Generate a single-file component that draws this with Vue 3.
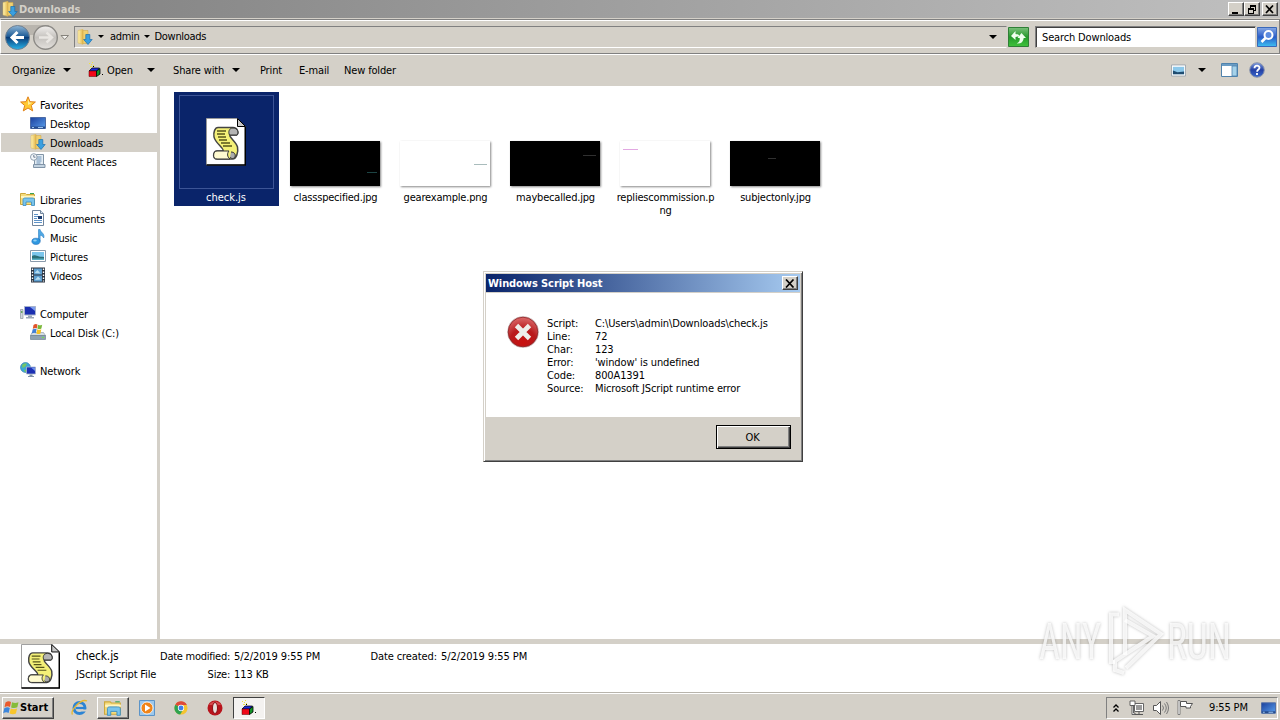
<template>
  <div class="screen">
    <svg class="sprite" width="0" height="0" aria-hidden="true">
      <defs>
        <linearGradient id="gFolder" x1="0" x2="1">
          <stop offset="0" stop-color="#fff3b0" />
          <stop offset="1" stop-color="#e3b64a" />
        </linearGradient>
        <linearGradient id="gScreen" x1="0" x2="1" y2="1">
          <stop offset="0" stop-color="#1a3f9c" />
          <stop offset="1" stop-color="#5aa0ee" />
        </linearGradient>
        <linearGradient id="gBack" y2="1" x2="0">
          <stop offset="0" stop-color="#8fb6d6" />
          <stop offset=".45" stop-color="#1f5d98" />
          <stop offset=".5" stop-color="#0a3c78" />
          <stop offset="1" stop-color="#27b4ea" />
        </linearGradient>
        <linearGradient id="gFwd" y2="1" x2="0">
          <stop offset="0" stop-color="#f2f0ee" />
          <stop offset=".5" stop-color="#c4c1bd" />
          <stop offset="1" stop-color="#e4e1dd" />
        </linearGradient>
        <linearGradient id="gGreen" y2="1" x2="0">
          <stop offset="0" stop-color="#7cc07c" />
          <stop offset=".5" stop-color="#259a2c" />
          <stop offset="1" stop-color="#3fc23c" />
        </linearGradient>
        <linearGradient id="gSearch" y2="1" x2="0">
          <stop offset="0" stop-color="#86a8e4" />
          <stop offset=".5" stop-color="#2a5cc8" />
          <stop offset="1" stop-color="#3ec0f2" />
        </linearGradient>
        <linearGradient id="gHelp" y2="1" x2="0">
          <stop offset="0" stop-color="#7f9ce0" />
          <stop offset=".5" stop-color="#2440a4" />
          <stop offset="1" stop-color="#3a68cc" />
        </linearGradient>
        <radialGradient id="gError" cx=".5" cy=".85" r=".9">
          <stop offset="0" stop-color="#c8100f" />
          <stop offset=".5" stop-color="#b81a1c" />
          <stop offset="1" stop-color="#e07474" />
        </radialGradient>
      </defs>

      <symbol id="dl" viewBox="0 0 16 16">
        <path d="M1 1.500l5-1.200v15L1 14z" fill="url(#gFolder)" stroke="#d8b65a" stroke-width=".5" />
        <path d="M6 1.500h5v13H6z" fill="#f0d070" stroke="#cfa544" stroke-width=".5" />
        <path d="M8.800 5.500h4v5h2.400L11 15.500 6.600 10.500h2.200z" fill="#3a9fe0" stroke="#1a6fae" stroke-width=".7" />
      </symbol>
      <symbol id="star" viewBox="0 0 16 16">
        <path d="M8 .8l2 4.900 5.400.3-4.100 3.500 1.400 5.400L8 12l-4.700 2.900 1.400-5.400L.6 6 6 5.700z" fill="#ffc933" stroke="#e0801a" stroke-width="1" />
        <path d="M8 3l1.300 3.500 3 .3L8 9z" fill="#fff0a0" />
      </symbol>
      <symbol id="desktop" viewBox="0 0 16 16">
        <path d="M.5 2.500h15v11H.5z" fill="url(#gScreen)" stroke="#4c6aa4" />
        <path d="M1 11.500h14v2H1z" fill="#254b8c" />
        <path d="M2 12h2v1H2zM8 12h5v1H8z" fill="#9cc4ee" />
      </symbol>
      <symbol id="recent" viewBox="0 0 16 16">
        <path d="M4.500 1.500h9v11h-9z" fill="#e4edf4" stroke="#8295a6" />
        <path d="M6.500 4h5M6.500 6h5M6.500 8h5M6.500 10h4" stroke="#6f93b8" />
        <path d="M3.500 11.500h11.500v3H3.500z" fill="#c3d3e0" stroke="#8194a8" />
        <circle cx="3.800" cy="4" r="3.300" fill="#f3f7fa" stroke="#90a0b0" />
        <path d="M3.800 2v2.200h1.700" fill="none" stroke="#4c6078" stroke-width=".8" />
      </symbol>
      <symbol id="library" viewBox="0 0 16 16">
        <path d="M.5 2.500h5l1 1h8v10H.5z" fill="#f5dc7e" stroke="#cda83c" />
        <path d="M1 5h14v2H1z" fill="#fff5c0" />
        <path d="M10 2.500h4" stroke="#3da456" />
        <path d="M3 8.500c0-1 1-1.500 2-1.500h7c1.500 0 2.500.5 2.500 1.500v6h-3v-3.500H6v3.500H3z" fill="#79c4ec" stroke="#3a8cc0" stroke-width=".8" />
      </symbol>
      <symbol id="document" viewBox="0 0 16 16">
        <path d="M2.500.5h8l3 3v12h-11z" fill="#fff" stroke="#71859c" />
        <path d="M10.500.5v3h3" fill="#d8e4f0" stroke="#71859c" />
        <path d="M4 4.500h4M4 6.500h4M4 8.500h3M4 10.500h8M4 12.500h8" stroke="#5f93c8" />
        <path d="M8 6h4v3H8z" fill="#1d3d70" />
      </symbol>
      <symbol id="music" viewBox="0 0 16 16">
        <path d="M8.500.5h1.600c.5 3 5 4 3.600 8.500-.8-1.800-2-2.600-3.600-2.800v6h-1.600z" fill="#4fa8e4" stroke="#2a7fc4" stroke-width=".6" />
        <ellipse cx="6" cy="12.300" rx="4.100" ry="3.100" fill="#2f98e0" stroke="#1c6cb8" stroke-width=".6" />
        <ellipse cx="5" cy="11.500" rx="1.800" ry="1.100" fill="#8fd0f6" />
      </symbol>
      <symbol id="picture" viewBox="0 0 16 16">
        <path d="M.5 2.500h15v11H.5z" fill="#fff" stroke="#8a9aab" />
        <path d="M2 4h12v8H2z" fill="#7cc6ec" />
        <path d="M2 8c3-2 5 1 12 1v3H2z" fill="#2b6f78" />
        <path d="M2 10.500h12V12H2z" fill="#58b0c4" />
      </symbol>
      <symbol id="video" viewBox="0 0 16 16">
        <path d="M1 .5h14v15H1z" fill="#2a3340" />
        <path d="M4 1.500h8v6H4zM4 8.500h8v6H4z" fill="#5e9fd0" />
        <path d="M4.500 6l3-3 3 3.500zM5 13l3-3.500 3 3z" fill="#b8ddf0" />
        <path d="M2.500 1.500v13M13.500 1.500v13" stroke="#fff" stroke-width="1.400" stroke-dasharray="1.500 1.500" />
      </symbol>
      <symbol id="computer" viewBox="0 0 16 16">
        <path d="M.5 4.500h2.500v9H.5z" fill="#d0d6dc" stroke="#8d979f" stroke-width=".7" />
        <path d="M1 6h1.500v2H1z" fill="#68a860" />
        <path d="M4.500 1.500h11v8.500h-11z" fill="#1b2fb0" stroke="#a6b2cc" />
        <path d="M10 2h5v4z" fill="#7c9cf0" />
        <path d="M8 10.500h4v1.500h2v1.500H6V12h2z" fill="#9ba7b8" />
      </symbol>
      <symbol id="disk" viewBox="0 0 16 16">
        <path d="M2 8.500h11.500l2 3H.5z" fill="#d4dde4" stroke="#8899a6" stroke-width=".6" />
        <path d="M.5 11.500h15v4H.5z" fill="#8ea2b0" stroke="#62788a" stroke-width=".6" />
        <path d="M12 13h2v1h-2z" fill="#6fe04c" />
        <path d="M3.500 1q2-1.500 4-.5L6.800 4.500q-1.800-1-4 .4z" fill="#e2542a" />
        <path d="M8 .8q2 1 4.200 0l-.8 3.800q-2 1-4.100 0z" fill="#7ab83a" />
        <path d="M2.600 5.500q2-1.300 4-.4L5.800 9.200q-1.700-1-4 .4z" fill="#3f7fd6" />
        <path d="M7.100 5.300q2 1 4.200 0l-.8 4.100q-2 1-4.100 0z" fill="#f4c224" />
      </symbol>
      <symbol id="network" viewBox="0 0 16 16">
        <circle cx="5.500" cy="5.500" r="5" fill="#3ca6d8" stroke="#2a78a8" stroke-width=".6" />
        <path d="M2 3q3-3 5-1L5 5 2.500 6zM4 8l3-1 1 2-3 1.200z" fill="#74c668" />
        <path d="M6.500 5h9v7h-9z" fill="#1c30b4" stroke="#a9b6cc" stroke-width=".8" />
        <path d="M11 5.500h4v3.500z" fill="#6f92ec" />
        <path d="M9.500 12.500h3V14h1.500v1H8v-1h1.500z" fill="#7f92a8" />
      </symbol>
      <symbol id="box" viewBox="0 0 16 16">
        <path d="M3 2.500h1M4 .5h1M2 4.500h2M5 3.500h1M1 1.500h1" stroke="#f0e43c" />
        <path d="M5 4h1v1H5zM14 12h1v1h-1z" fill="#000" />
        <path d="M1 9l3-3h7.500L9 9z" fill="#1a28d8" stroke="#000" stroke-width=".7" />
        <path d="M1 9h7.500v5.500H1z" fill="#f00818" stroke="#500" stroke-width=".5" />
        <path d="M8.500 9L12 6.500V12l-3.500 2.500z" fill="#129428" stroke="#000" stroke-width=".8" />
      </symbol>
      <symbol id="script" viewBox="0 0 40 48">
        <path d="M.5.500h31l8 8V47H.5z" fill="#fff" stroke="#999" />
        <path d="M.5 47h38.800V9" fill="none" stroke="#000" stroke-width="1.600" />
        <path d="M31.500.500v8h8z" fill="#c8c8c8" stroke="#000" />
        <path d="M12 9.500h15c5 0 6 6 3.500 7.500h-6c-3 1 6 7 7 12 1 5-1 12-5 12H11c-5 0-4-8 0-8h6c2-2-8-8-9-14-.8-5 1-9.500 4-9.500z" fill="#f4f078" stroke="#444" stroke-width="1.500" />
        <path d="M27 10c-4 0-5 4-3.500 7h7.500c2-2 1-7-4-7z" fill="#b4b4b4" stroke="#333" />
        <path d="M11 33h12c-2 2-2 6 1 8H11c-5 0-4-8 0-8z" fill="#fffbd0" stroke="#333" />
        <path d="M25 34c3 0 5 2 4 5-1 2-4 2-5 0" fill="#aaa" stroke="#333" />
        <path d="M11 13h9M11 16h8M12 19h8M13 22h8M15 25h9M17 28h9" stroke="#55531a" stroke-width="1.300" />
      </symbol>
      <symbol id="flagwin" viewBox="0 0 17 16">
        <path d="M2.500 2.500q3-2 5.500-.5L7 7Q4.500 5.500 1.500 7.200z" fill="#ea5a2c" />
        <path d="M9 2.300q3 1.500 6.500 0l-1.200 5q-3 1.500-6.200.1z" fill="#86bc3a" />
        <path d="M1.300 8.300q3-1.800 5.500-.3l-1.200 5q-2.500-1.500-5.400.3z" fill="#3c86dc" />
        <path d="M7.800 8.400q3 1.500 6.300 0l-1.200 5q-3 1.500-6.300 0z" fill="#f8c62c" />
      </symbol>
    </svg>

    <header class="titlebar">
      <svg class="i16"><use href="#dl" /></svg>
      <span class="title">Downloads</span>
      <div class="winbtns">
        <button><svg width="10" height="9"><path d="M1 7h6v2H1z" /></svg></button>
        <button>
          <svg width="10" height="9"><path d="M3 0h6v6H7V5h1V2H4v1H3z" /><path d="M1 3h6v6H1zM2 5v3h4V5z" fill-rule="evenodd" /></svg>
        </button>
        <button class="x"><svg width="10" height="9"><path d="M1 .500l7 7.500M8 .500L1 8" stroke="#000" stroke-width="1.700" /></svg></button>
      </div>
    </header>

    <div class="address">
      <svg class="navbtns" width="66" height="28" viewBox="0 0 66 28">
        <path d="M14 2h30v10H14z" fill="#b9b5ae" />
        <circle cx="12.500" cy="14.500" r="12" fill="url(#gBack)" stroke="#6f7f90" />
        <path d="M12.500 9L7 14.500l5.500 5.500M7.500 14.500H19" fill="none" stroke="#fff" stroke-width="3" />
        <circle cx="40.500" cy="14.500" r="11.800" fill="url(#gFwd)" stroke="#8c8a86" stroke-width="1.400" />
        <path d="M41.500 9.500l5.500 5-5.500 5M34 14.500h13" fill="none" stroke="#e9e6e2" stroke-width="2.400" />
        <path d="M56 12.500h7.500l-3.800 4z" fill="#f4f2ee" stroke="#86837c" />
      </svg>
      <div class="path">
        <svg class="i16"><use href="#dl" /></svg>
        <i class="tri small root" />
        <span>admin</span>
        <i class="tri small" />
        <span>Downloads</span>
        <i class="tri end" />
      </div>
      <svg class="go" width="21" height="20" viewBox="0 0 21 20">
        <path d="M.5.500h20v19H.5z" fill="url(#gGreen)" stroke="#2f7f36" />
        <path d="M3 9l4.500-5v3q4 0 4 3-1.500-1-4 0v3z" fill="#f0fff0" />
        <path d="M18 11l-4.500-5L9.500 11h2.200q.5 4-3 5.500 6.500.5 7-5.500z" fill="#f0fff0" />
      </svg>
      <div class="search">Search Downloads</div>
      <svg class="find" width="20" height="20" viewBox="0 0 20 20">
        <path d="M.5.500h19v19H.5z" fill="url(#gSearch)" stroke="#3a68b8" />
        <circle cx="11.500" cy="8" r="4" fill="#5d8ce0" stroke="#fff" stroke-width="2" />
        <path d="M8.500 11l-4 4" stroke="#fff" stroke-width="2.600" />
      </svg>
    </div>

    <nav class="toolbar">
      <div class="tool organize">Organize<i class="tri" /></div>
      <div class="tool open"><svg class="i16"><use href="#box" /></svg><span>Open</span><i class="tri" /></div>
      <div class="tool share">Share with<i class="tri" /></div>
      <div class="tool print">Print</div>
      <div class="tool email">E-mail</div>
      <div class="tool">New folder</div>
      <div class="views">
        <svg width="15" height="13" viewBox="0 0 16 14">
          <path d="M.5 1h15v12H.5z" fill="#fff" stroke="#9ca4ac" />
          <path d="M2 3h12v8H2z" fill="#8cc8ea" />
          <path d="M2 7l5 2 7-1v3H2z" fill="#1f4c70" />
        </svg>
        <i class="tri" />
        <svg class="pane" width="17" height="14" viewBox="0 0 17 14">
          <path d="M.5.500h16v13H.5z" fill="#fff" stroke="#4f82ac" />
          <path d="M1 1h15v2H1z" fill="#6a9cc4" />
          <path d="M11 3h5v10h-5z" fill="#a5d2ea" stroke="#4f82ac" stroke-width=".8" />
        </svg>
        <svg width="16" height="16" viewBox="0 0 16 16">
          <circle cx="8" cy="8" r="7.300" fill="url(#gHelp)" stroke="#8c96ac" />
          <path d="M5.500 6.200c0-3.400 5-3.200 5-.4 0 1.800-2.400 1.700-2.400 3.900M8 11v2" fill="none" stroke="#fff" stroke-width="1.800" />
        </svg>
      </div>
    </nav>

    <main class="body">
      <aside class="tree">
        <div
          v-for="(n, i) in tree"
          :key="i"
          class="node"
          :class="{ child: n.child, active: n.active }"
        >
          <template v-if="n.text">
            <svg class="i16"><use :href="'#' + n.icon" /></svg>
            <span>{{ n.text }}</span>
          </template>
        </div>
      </aside>

      <section class="files">
        <div v-for="f in files" :key="f.name" class="file" :class="{ selected: f.selected }">
          <div class="preview">
            <svg v-if="f.selected" width="40" height="48"><use href="#script" /></svg>
            <div v-else class="thumb" :class="f.tone">
              <i :style="{ left: f.x + 'px', top: f.y + 'px', width: f.w + 'px', background: f.mark }" />
            </div>
          </div>
          <div class="name">{{ f.name }}</div>
        </div>
      </section>
    </main>

    <footer class="details">
      <svg width="39" height="45" viewBox="0 0 40 48" preserveAspectRatio="none"><use href="#script" /></svg>
      <div class="what">
        <span class="big">check.js</span>
        <span>JScript Script File</span>
      </div>
      <div class="meta first">
        <b>Date modified:</b><span>5/2/2019 9:55 PM</span>
        <b>Size:</b><span>113 KB</span>
      </div>
      <div class="meta">
        <b>Date created:</b><span>5/2/2019 9:55 PM</span>
      </div>
    </footer>

    <div class="taskbar">
      <div class="start">
        <svg width="17" height="16"><use href="#flagwin" /></svg><span>Start</span>
      </div>
      <div class="task">
        <svg width="17" height="17" viewBox="0 0 17 17">
          <circle cx="8.500" cy="9" r="5.500" fill="none" stroke="#2c84d4" stroke-width="3" />
          <path d="M5 9h9" stroke="#2c84d4" stroke-width="2.200" />
          <path d="M11 10.500h5v2h-5z" fill="#d4d0c8" />
          <path d="M1.500 15.500C-1 12 10-1 16 2" fill="none" stroke="#e8b830" stroke-width="1.300" />
        </svg>
      </div>
      <div class="task raised"><svg class="i18"><use href="#library" /></svg></div>
      <div class="task">
        <svg width="16" height="16" viewBox="0 0 16 16">
          <path d="M.5.500h15v15H.5z" fill="#9cc8ec" stroke="#5c94c8" />
          <circle cx="8" cy="8" r="6" fill="#f08418" stroke="#fff" stroke-width=".8" />
          <path d="M6 4.500v7L11.500 8z" fill="#fff" />
        </svg>
      </div>
      <div class="task">
        <svg width="14" height="14" viewBox="0 0 16 16">
          <circle cx="8" cy="8" r="7.500" fill="#f4c430" />
          <path d="M8 8L1.500 4.200A7.500 7.500 0 0 1 14.700 4.500H8z" fill="#de4a3a" />
          <path d="M8 8L1.500 4.200A7.500 7.500 0 0 0 7 15.500L10.500 10z" fill="#2fa350" />
          <circle cx="8" cy="8" r="3.600" fill="#fff" />
          <circle cx="8" cy="8" r="2.800" fill="#3f7fe8" />
        </svg>
      </div>
      <div class="task">
        <svg width="16" height="16" viewBox="0 0 16 16">
          <circle cx="8" cy="8" r="7.500" fill="#b8141c" />
          <path d="M2 5a7 7 0 0 1 12 0z" fill="#e87070" opacity=".6" />
          <ellipse cx="8" cy="8" rx="2.500" ry="5.500" fill="#e6e0dc" stroke="#8c0c14" />
        </svg>
      </div>
      <div class="task pressed"><svg class="i16"><use href="#box" /></svg></div>

      <div class="tray">
        <svg width="6" height="8" viewBox="0 0 6 8"><path d="M.5 3.500L3 1l2.500 2.500M.5 7.500L3 5l2.500 2.500" fill="none" stroke="#000" stroke-width="1.300" /></svg>
        <svg class="net" width="16" height="16" viewBox="0 0 16 16">
          <path d="M5.500 3.500h9v8h-9z" fill="#fff" stroke="#666" />
          <path d="M7 5h6v5H7z" fill="#9a9a9a" />
          <path d="M6 14.500h8M10 12v2" stroke="#555" />
          <path d="M1 1h5v4.500H1zM3 5.500h1.500V13H6v1.500H3z" fill="#fff" stroke="#555" stroke-width=".9" />
        </svg>
        <svg class="snd" width="16" height="14" viewBox="0 0 16 14">
          <path d="M.5 4.500h3l4-4v13l-4-4h-3z" fill="#fff" stroke="#555" />
          <path d="M9.500 4.500q2 2.500 0 5M11.500 2.500q3.500 4.500 0 9M13.500 1q4 6 0 12" fill="none" stroke="#777" />
        </svg>
        <svg class="flag" width="17" height="15" viewBox="0 0 17 15">
          <path d="M1 .500h2v14H1z" fill="#fff" stroke="#666" stroke-width=".8" />
          <path d="M3.500 1.500h6v2h6l-2 3v1.500H9v-1.500H3.500z" fill="#fff" stroke="#555" />
        </svg>
        <span class="clock">9:55 PM</span>
        <svg width="15" height="14" viewBox="0 1 16 14"><use href="#desktop" width="16" height="16" /></svg>
      </div>
    </div>

    <div class="dialog">
      <div class="dlg-title">
        <span>Windows Script Host</span>
        <button><svg width="10" height="9"><path d="M1 .500l7.500 8M8.500 .500L1 8.500" stroke="#000" stroke-width="1.700" /></svg></button>
      </div>
      <div class="dlg-body">
        <svg width="32" height="32" viewBox="0 0 32 32">
          <circle cx="16" cy="16" r="15.800" fill="#c9b6b6" />
          <circle cx="16" cy="16" r="14.800" fill="url(#gError)" stroke="#8f2022" stroke-width=".8" />
          <path d="M9.500 9.500l13 13M22.500 9.500l-13 13" stroke="#eeeeea" stroke-width="4.800" />
        </svg>
        <dl>
          <template v-for="r in report" :key="r[0]">
            <dt>{{ r[0] }}</dt>
            <dd>{{ r[1] }}</dd>
          </template>
        </dl>
      </div>
      <div class="dlg-foot"><button class="ok">OK</button></div>
    </div>

    <svg class="watermark" width="220" height="76" viewBox="0 0 220 76">
      <g class="wm">
        <text x="8" y="56" textLength="62" lengthAdjust="spacingAndGlyphs">ANY</text>
        <text x="136" y="56" textLength="64" lengthAdjust="spacingAndGlyphs">RUN</text>
        <path d="M88 11.500h-8V59h4" />
        <path d="M94 52V7l36 24-35 34" />
        <path d="M94 17l28 16-38 25v9l9 3" />
      </g>
    </svg>
  </div>
</template>

<script setup>
const tree = [
  { text: 'Favorites', icon: 'star' },
  { text: 'Desktop', icon: 'desktop', child: true },
  { text: 'Downloads', icon: 'dl', child: true, active: true },
  { text: 'Recent Places', icon: 'recent', child: true },
  {},
  { text: 'Libraries', icon: 'library' },
  { text: 'Documents', icon: 'document', child: true },
  { text: 'Music', icon: 'music', child: true },
  { text: 'Pictures', icon: 'picture', child: true },
  { text: 'Videos', icon: 'video', child: true },
  {},
  { text: 'Computer', icon: 'computer' },
  { text: 'Local Disk (C:)', icon: 'disk', child: true },
  {},
  { text: 'Network', icon: 'network' }
]

const files = [
  { name: 'check.js', selected: true },
  { name: 'classspecified.jpg', tone: 'dark', x: 77, y: 31, w: 10, mark: '#1d4444' },
  { name: 'gearexample.png', tone: 'light', x: 74, y: 23, w: 13, mark: '#a9bcbc' },
  { name: 'maybecalled.jpg', tone: 'dark', x: 73, y: 14, w: 13, mark: '#303030' },
  { name: 'repliescommission.png', tone: 'light', x: 3, y: 8, w: 15, mark: '#e2a8e2' },
  { name: 'subjectonly.jpg', tone: 'dark', x: 38, y: 17, w: 8, mark: '#303030' }
]

const report = [
  ['Script:', 'C:\\Users\\admin\\Downloads\\check.js'],
  ['Line:', '72'],
  ['Char:', '123'],
  ['Error:', "'window' is undefined"],
  ['Code:', '800A1391'],
  ['Source:', 'Microsoft JScript runtime error']
]
</script>

<style>
body {
  margin: 0;
  overflow: hidden;
}
</style>

<style scoped>
.screen {
  position: relative;
  display: flex;
  flex-direction: column;
  width: 1280px;
  height: 720px;
  overflow: hidden;
  box-sizing: border-box;
  background: #d4d0c8;
  color: #000;
  font-family: Tahoma, 'DejaVu Sans Condensed', 'DejaVu Sans', sans-serif;
  font-stretch: condensed;
  font-size: 11px;
  line-height: 13px;
  letter-spacing: -0.15px;
  white-space: nowrap;
}

.screen *,
.screen *::before {
  box-sizing: border-box;
}

.sprite {
  position: absolute;
}

svg {
  display: block;
  flex: none;
}

.i16 {
  width: 16px;
  height: 16px;
}

.i18 {
  width: 18px;
  height: 18px;
}

button {
  display: flex;
  align-items: center;
  justify-content: center;
  padding: 0;
  border: 1px solid;
  border-color: #fff #404040 #404040 #fff;
  box-shadow: inset -1px -1px #808080;
  background: #d4d0c8;
  font: inherit;
  letter-spacing: inherit;
}

.tri {
  flex: none;
  width: 0;
  height: 0;
  border: 4px solid transparent;
  border-top-color: #000;
  border-bottom: 0;
}

.tri.small {
  border-width: 3px 3px 0;
}

/* title bar */
.titlebar {
  display: flex;
  align-items: center;
  height: 18px;
  padding: 0 2px;
  background: linear-gradient(90deg, #808080, #c0c0c0);
}

.title {
  margin-left: 1px;
  color: #d4d0c8;
  font-weight: bold;
  letter-spacing: 0.05px;
}

.winbtns {
  display: flex;
  margin-left: auto;
}

.winbtns button {
  width: 16px;
  height: 14px;
}

.winbtns .x {
  margin-left: 2px;
}

/* address row */
.address {
  display: flex;
  align-items: center;
  height: 35px;
  margin-top: 1px;
  padding: 0 2px 0 4px;
  border: 1px solid;
  border-color: #808080 #808080 #808080 #fff;
  box-shadow: inset 0 1px #fff;
}

.path {
  display: flex;
  align-items: center;
  width: 933px;
  height: 22px;
  margin-left: 3px;
  padding: 0 9px 0 2px;
  border: 1px solid;
  border-color: #808080 #d4d0c8 #fff #808080;
}

.path .tri {
  margin: 0 5px 0 4px;
}

.path .tri.root {
  margin: 0 6px 0 5px;
}

.path .tri.end {
  margin: 0 0 0 auto;
}

.path span {
  padding-bottom: 1px;
  letter-spacing: -0.3px;
}

.go {
  margin-left: 1px;
}

.search {
  width: 221px;
  height: 22px;
  margin-left: 6px;
  padding: 4px 6px;
  border: 1px solid;
  border-color: #808080 #d4d0c8 #d4d0c8 #808080;
  box-shadow: inset 1px 1px #404040;
  background: #fff;
}

.find {
  margin-left: 1px;
}

/* toolbar */
.toolbar {
  display: flex;
  align-items: center;
  height: 32px;
  padding: 0 15px 1px 12px;
  border-top: 1px solid #fff;
}

.tool {
  display: flex;
  align-items: center;
  justify-content: space-between;
}

.organize {
  width: 59px;
  margin-right: 17px;
}

.open {
  width: 67px;
  margin-right: 18px;
}

.open span {
  margin: 0 auto 0 3px;
}

.share {
  width: 67px;
  margin-right: 20px;
}

.print {
  width: 39px;
}

.email {
  width: 45px;
}

.views {
  display: flex;
  align-items: center;
  margin-left: auto;
}

.views .tri {
  margin: 0 15px 0 12px;
}

.pane {
  margin-right: 11px;
}

/* body */
.body {
  display: flex;
  height: 553px;
  background: #fff;
}

.tree {
  width: 160px;
  padding-top: 9px;
  border-right: 3px solid #d4d0c8;
}

.node {
  display: flex;
  align-items: center;
  gap: 4px;
  height: 19px;
  margin-left: 1px;
  padding-left: 19px;
}

.node svg {
  margin-bottom: 1px;
}

.node span {
  padding-top: 2px;
}

.node.child {
  padding-left: 29px;
}

.node.active {
  height: 19px;
  background: #d4d0c8;
}

.files {
  display: flex;
  align-items: flex-start;
  gap: 5px;
  padding: 6px 13px;
}

.file {
  width: 105px;
  height: 114px;
  text-align: center;
}

.file.selected {
  margin: 0 -1px 0 1px;
  background: #0a246a;
  color: #fff;
}

.preview {
  display: flex;
  align-items: flex-end;
  justify-content: center;
  height: 94px;
  margin-bottom: 5px;
}

.selected .preview {
  align-items: center;
  width: 95px;
  height: 94px;
  margin: 3px 5px 2px;
  padding-right: 1px;
  border: 1px solid #3c5496;
}

.thumb {
  position: relative;
  width: 90px;
  height: 45px;
  margin-right: 1px;
  box-shadow: 1px 1px 2px #888;
}

.thumb.dark {
  background: #000;
}

.thumb.light {
  background: #fff;
}

.thumb i {
  position: absolute;
  height: 1px;
}

.name {
  padding: 0 3px;
  white-space: normal;
  word-break: break-all;
  letter-spacing: -0.2px;
}

.selected .name {
  padding-right: 4px;
  letter-spacing: 0;
}

/* details pane */
.details {
  display: flex;
  align-items: flex-start;
  height: 54px;
  padding-left: 21px;
  border-top: 5px solid #d4d0c8;
  border-bottom: 1px solid #b8b4ac;
  background: #fff;
}

.what {
  display: flex;
  flex-direction: column;
  gap: 5px;
  width: 83px;
  margin-left: 16px;
  padding-top: 6px;
}

.big {
  font-size: 12px;
}

.meta {
  display: grid;
  grid-template-columns: 67px auto;
  gap: 5px 4px;
  padding-top: 6px;
  letter-spacing: -0.08px;
}

.meta b {
  font-weight: normal;
  text-align: right;
  letter-spacing: -0.25px;
}

.meta:not(.first) b {
  letter-spacing: -0.1px;
}

.meta.first {
  grid-template-columns: 71px 136px;
}

/* taskbar */
.taskbar {
  display: flex;
  align-items: center;
  height: 27px;
  padding: 1px 2px 0;
  border-top: 1px solid #fff;
}

.start {
  display: flex;
  align-items: center;
  width: 52px;
  height: 22px;
  margin-right: 9px;
  border: 1px solid;
  border-color: #fff #404040 #404040 #fff;
  box-shadow: inset -1px -1px #808080;
  font-weight: bold;
  letter-spacing: 0;
}

.task {
  display: flex;
  align-items: center;
  justify-content: center;
  width: 32px;
  height: 22px;
  margin-right: 2px;
}

.task.raised {
  border: 1px solid;
  border-color: #fff #404040 #404040 #fff;
  box-shadow: inset -1px -1px #808080;
}

.task.pressed {
  border: 1px solid;
  border-color: #404040 #fff #fff #404040;
  background: #f4f2f0;
}

.tray {
  display: flex;
  align-items: center;
  width: 172px;
  height: 22px;
  margin-left: auto;
  padding-left: 6px;
  border: 1px solid;
  border-color: #808080 #fff #fff #808080;
}

.net {
  margin-left: 10px;
}

.snd {
  margin-left: 8px;
}

.flag {
  margin-left: 8px;
}

.clock {
  width: 52px;
  margin-left: 15px;
}

/* message box */
.dialog {
  position: absolute;
  left: 483px;
  top: 271px;
  width: 320px;
  height: 191px;
  padding: 2px;
  border: 1px solid;
  border-color: #d4d0c8 #404040 #404040 #d4d0c8;
  box-shadow: inset 1px 1px #fff, inset -1px -1px #808080;
  background: #d4d0c8;
}

.dlg-title {
  display: flex;
  align-items: center;
  justify-content: space-between;
  height: 18px;
  padding: 0 2px;
  background: linear-gradient(90deg, #0a246a, #a6caf0);
  color: #fff;
  font-weight: bold;
  letter-spacing: -0.08px;
}

.dlg-title button {
  width: 16px;
  height: 14px;
}

.dlg-body {
  display: flex;
  height: 124px;
  margin-top: 1px;
  padding: 23px 0 0 21px;
  background: #fff;
}

dl {
  display: grid;
  grid-template-columns: 48px auto;
  align-content: start;
  margin: 1px 0 0 8px;
  letter-spacing: -0.12px;
}

dd {
  margin: 0;
}

.dlg-foot {
  display: flex;
  justify-content: flex-end;
  padding: 8px 9px;
}

.ok {
  width: 75px;
  height: 24px;
  padding-right: 2px;
  border-color: #000;
  box-shadow: inset 1px 1px #fff, inset -1px -1px #404040, inset -2px -2px #808080;
}

/* recording logo laid over the desktop */
.watermark {
  position: absolute;
  left: 1031px;
  top: 603px;
}

.wm {
  filter: drop-shadow(0 0 1.5px rgba(110, 110, 110, 0.55));
  font-family: Roboto, sans-serif;
  font-size: 50px;
  letter-spacing: 0;
}

.wm text {
  fill: #fff;
  fill-opacity: 0.8;
}

.wm path {
  fill: none;
  stroke: #fff;
  stroke-opacity: 0.8;
  stroke-width: 4;
}
</style>
